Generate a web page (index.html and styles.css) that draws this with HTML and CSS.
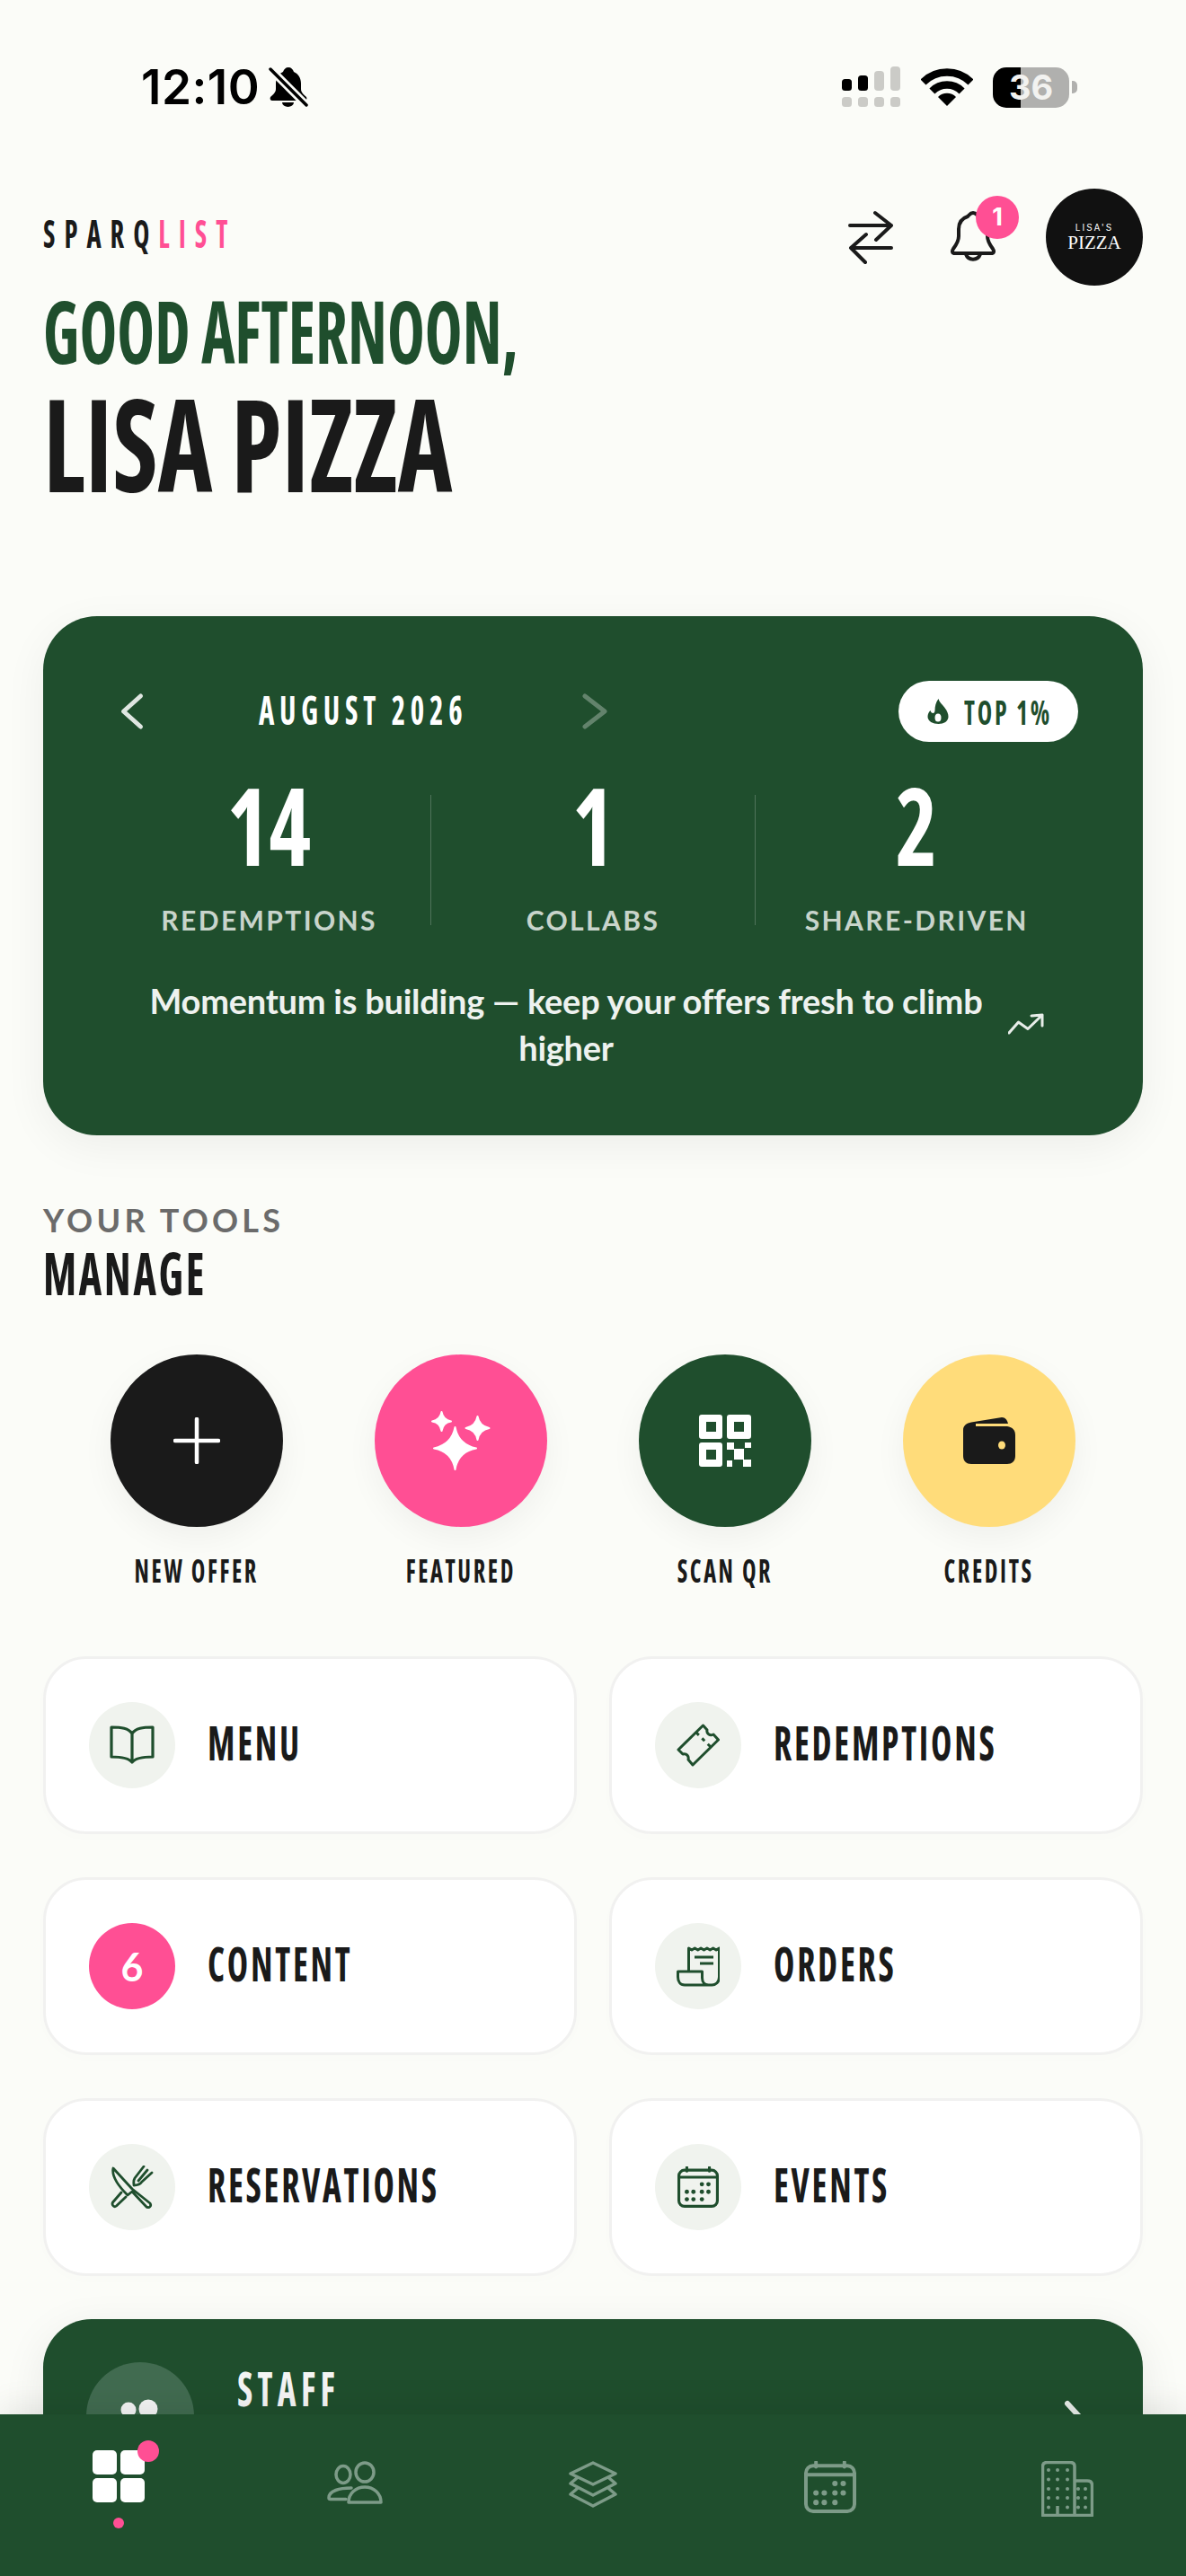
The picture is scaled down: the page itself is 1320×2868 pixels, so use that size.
FILE: index.html
```html
<!DOCTYPE html>
<html lang="en">
<head>
  <meta charset="UTF-8">
  <title>Dashboard</title>
  <link rel="stylesheet" href="styles.css">
</head>
<body>
  <svg class="defs" aria-hidden="true">
    <symbol id="calendar" viewBox="0 0 44 44">
      <rect x="1.5" y="4" width="41" height="38.5" rx="6" fill="none" stroke="currentColor" stroke-width="3"/>
      <path d="M1.5 11.5h41M10 1v4M34 1v4" fill="none" stroke="currentColor" stroke-width="3" stroke-linecap="round"/>
      <g fill="currentColor">
        <circle cx="26" cy="19" r="2.3"/><circle cx="33" cy="19" r="2.3"/>
        <circle cx="10" cy="27" r="2.3"/><circle cx="17" cy="27" r="2.3"/><circle cx="26" cy="27" r="2.3"/><circle cx="33" cy="27" r="2.3"/>
        <circle cx="10" cy="35" r="2.3"/><circle cx="17" cy="35" r="2.3"/><circle cx="26" cy="35" r="2.3"/>
      </g>
    </symbol>
  </svg>

  <div class="screen">
    <div class="status">
      <div class="status-left">
        <span class="time">12:10</span>
        <svg class="silent" width="44" height="46" viewBox="0 0 44 46">
          <path d="M22 1c-3 0-5 2-6 5-5 2-8 7-8 13v6c0 4-3 6-6 9-1 2 0 4 2 4h36c2 0 3-2 2-4-3-3-6-5-6-9v-6c0-6-3-11-8-13-1-3-3-5-6-5z"/>
          <path d="M15 40h13a6.500 5 0 0 1-13 0z"/>
          <path d="M3 4l38 38" stroke="#fbfcf8" stroke-width="9"/>
          <path d="M2 3l40 40" stroke="#000" stroke-width="3.500" stroke-linecap="round"/>
        </svg>
      </div>
      <div class="status-right">
        <svg width="66" height="46" viewBox="0 0 66 46">
          <g fill="#cbcbc7">
            <rect x="36" y="5" width="11" height="22" rx="4"/><rect x="54" y="0" width="11" height="27" rx="4"/>
            <rect x="0" y="34" width="11" height="11" rx="3.500"/><rect x="18" y="34" width="11" height="11" rx="3.500"/>
            <rect x="36" y="34" width="11" height="11" rx="3.500"/><rect x="54" y="34" width="11" height="11" rx="3.500"/>
          </g>
          <rect x="0" y="14" width="11" height="13" rx="3.500"/><rect x="18" y="10" width="11" height="17" rx="3.500"/>
        </svg>
        <svg width="58" height="44" viewBox="0 0 58 44">
          <path d="M2.500 16.500A37.500 37.500 0 0 1 55.500 16.500M12.400 26.400A23.500 23.500 0 0 1 45.600 26.400" fill="none" stroke="#000" stroke-width="8.500"/>
          <path d="M29 43L19 33A14 14 0 0 1 39 33Z"/>
        </svg>
        <div class="battery-wrap">
          <div class="battery">36</div>
          <div class="battery-nub"></div>
        </div>
      </div>
    </div>

    <header class="top">
      <div class="brand">
        <div class="logo"><span class="bn">SPARQ<em>LIST</em></span></div>
        <div class="greet"><span class="bn">GOOD AFTERNOON,</span></div>
        <h1 class="name"><span class="bn">LISA PIZZA</span></h1>
      </div>
      <div class="top-actions">
        <svg class="swap" width="50" height="62" viewBox="0 0 50 62">
          <path d="M2 18h46M30 4l18 14-17 16M48 43H3M20 28L3 43l16 16" fill="none" stroke="#1a1a1a" stroke-width="4" stroke-linecap="round" stroke-linejoin="round"/>
        </svg>
        <div class="bell">
          <svg width="54" height="62" viewBox="0 0 54 62" fill="none" stroke="#1a1a1a" stroke-width="4" stroke-linejoin="round">
            <path d="M27 4c-3 0-4 2-6 4-6 2-10 6-10 14v8c0 6-3 10-6 14-2 3-1 5 2 5h40c3 0 4-2 2-5-3-4-6-8-6-14v-8c0-8-4-12-10-14-2-2-3-4-6-4z"/>
            <path d="M19 50a8.500 8.500 0 0 0 16 0"/>
          </svg>
          <span class="bell-badge">1</span>
        </div>
        <div class="avatar">
          <span class="avatar-small">LISA'S</span>
          <span class="avatar-big">PIZZA</span>
        </div>
      </div>
    </header>

    <section class="stats-card">
      <div class="stats-head">
        <div class="month-nav">
          <svg width="54" height="54" viewBox="0 0 54 54"><path d="M36.500 10L17.500 27l19 17" fill="none" stroke="#dfe6e1" stroke-width="5" stroke-linecap="round" stroke-linejoin="round"/></svg>
          <span class="month"><span class="bn bn-c">AUGUST 2026</span></span>
          <svg class="next" width="54" height="54" viewBox="0 0 54 54"><path d="M16 10l22 17-22 17" fill="none" stroke="#fff" stroke-width="5" stroke-linecap="round" stroke-linejoin="round"/></svg>
        </div>
        <div class="rank-pill">
          <svg width="24" height="28" viewBox="0 0 24 28">
            <path d="M12.500 0c1 4 4 6 7 10 3 4 4 7 4 10 0 5-5 8-11 8S.5 25 .5 20c0-3 1-5 3-7 .5 2 1.500 3 3 3 1 0 2-1 2-3 0-5 1-9 4-13z" fill="#1f4e2d"/>
            <ellipse cx="12" cy="21" rx="3.500" ry="4.500" fill="#fff"/>
          </svg>
          <span class="bn">TOP 1%</span>
        </div>
      </div>

      <div class="stats-row">
        <div class="stat">
          <div class="stat-num"><span class="bn bn-c">14</span></div>
          <div class="stat-label">REDEMPTIONS</div>
        </div>
        <div class="stat-divider"></div>
        <div class="stat">
          <div class="stat-num"><span class="bn bn-c">1</span></div>
          <div class="stat-label">COLLABS</div>
        </div>
        <div class="stat-divider"></div>
        <div class="stat">
          <div class="stat-num"><span class="bn bn-c">2</span></div>
          <div class="stat-label">SHARE-DRIVEN</div>
        </div>
      </div>

      <div class="momentum">
        <p>Momentum is building — keep your offers fresh to climb higher</p>
        <svg width="40" height="24" viewBox="0 0 40 24"><path d="M1 22L11.500 10 22 17.500 38 2M26 3l12-1v12" fill="none" stroke="#e8ede9" stroke-width="3" stroke-linecap="round" stroke-linejoin="round"/></svg>
      </div>
    </section>

    <section class="tools">
      <div class="eyebrow">YOUR TOOLS</div>
      <h2 class="section-title"><span class="bn">MANAGE</span></h2>

      <div class="quick-row">
        <div class="quick">
          <div class="quick-circle black">
            <svg width="52" height="52" viewBox="0 0 52 52"><path d="M26 2v48M2 26h48" stroke="#fff" stroke-width="4.500" stroke-linecap="round"/></svg>
          </div>
          <div class="quick-label"><span class="bn bn-c">NEW OFFER</span></div>
        </div>
        <div class="quick">
          <div class="quick-circle pink">
            <svg width="72" height="72" viewBox="0 0 72 72" fill="#fff" stroke="#fff" stroke-width="2" stroke-linejoin="round">
              <path d="M29.500 21Q33 40 53 44.500 33 48 29.500 68 26 48 6 44.500 26 40 29.500 21z"/>
              <path d="M14.500 4Q16 13 25 14.500 16 16 14.500 25 13 16 4 14.500 13 13 14.500 4z"/>
              <path d="M54.500 9Q56.500 20 67.500 22 56.500 24 54.500 35 52.500 24 41.500 22 52.500 20 54.500 9z"/>
            </svg>
          </div>
          <div class="quick-label"><span class="bn bn-c">FEATURED</span></div>
        </div>
        <div class="quick">
          <div class="quick-circle green">
            <svg width="58" height="58" viewBox="0 0 58 58" fill="#fff">
              <path fill-rule="evenodd" d="M3 0h20a3 3 0 0 1 3 3v21a3 3 0 0 1-3 3H3a3 3 0 0 1-3-3V3a3 3 0 0 1 3-3zM8 8v11h11V8zM34 0h21a3 3 0 0 1 3 3v21a3 3 0 0 1-3 3H34a3 3 0 0 1-3-3V3a3 3 0 0 1 3-3zM39 8v11h11V8zM3 31h20a3 3 0 0 1 3 3v21a3 3 0 0 1-3 3H3a3 3 0 0 1-3-3V34a3 3 0 0 1 3-3zM8 39v11h11V39z"/>
              <rect x="31" y="31" width="8" height="8"/><rect x="51" y="31" width="7" height="6"/><rect x="39" y="38" width="11" height="12"/><rect x="31" y="51" width="6" height="7"/><rect x="49" y="50" width="9" height="8"/>
            </svg>
          </div>
          <div class="quick-label"><span class="bn bn-c">SCAN QR</span></div>
        </div>
        <div class="quick">
          <div class="quick-circle yellow">
            <svg width="58" height="53" viewBox="0 0 58 53">
              <path d="M9 5.500L43 0c4 0 6 3 7 7H14v3h35c6 1 9 4 9 10v23c0 6-4 9-9 9H9c-5 0-9-3-9-9V14c0-5 4-7.500 9-8.500z" fill="#1a1a1a"/>
              <ellipse cx="43" cy="31" rx="4" ry="4.500" fill="#ffdc7a"/>
            </svg>
          </div>
          <div class="quick-label"><span class="bn bn-c">CREDITS</span></div>
        </div>
      </div>
    </section>

    <section class="tool-grid">
      <div class="tool-card">
        <div class="tool-icon">
          <svg width="50" height="44" viewBox="0 0 50 44" fill="none" stroke="#1f4e2d" stroke-width="3.200" stroke-linejoin="round">
            <path d="M25 9C21 3 13 2 2 2v33c11 0 19 1 23 6 4-5 12-6 23-6V2C37 2 29 3 25 9v32"/>
          </svg>
        </div>
        <span class="tool-name bn">MENU</span>
      </div>
      <div class="tool-card">
        <div class="tool-icon">
          <svg width="48" height="48" viewBox="0 0 48 48" fill="none" stroke="#1f4e2d" stroke-width="3" stroke-linejoin="round">
            <path d="M29.500 2L34 7c-1 4 3 7 7 5l5.500 6L18 46l-5-6c1-4-2-7-6-6l-5-5z"/>
            <path d="M22 10l17 17" stroke-dasharray="4 5"/>
          </svg>
        </div>
        <span class="tool-name bn">REDEMPTIONS</span>
      </div>
      <div class="tool-card">
        <div class="tool-icon count">6</div>
        <span class="tool-name bn">CONTENT</span>
      </div>
      <div class="tool-card">
        <div class="tool-icon">
          <svg width="48" height="45" viewBox="0 0 48 45" fill="none" stroke="#1f4e2d" stroke-width="3" stroke-linejoin="round">
            <path d="M13.500 28V2l3.400 2 3.400-2 3.400 2 3.400-2 3.400 2 3.400-2 3.400 2 3.400-2 3.400 2 3.400-2v32c0 6-4 9-8 9H9c-5 0-7.500-4-7.500-9v-6h27v7c0 5 3 8 7 8"/>
            <path d="M20 12h21M26 19h15"/>
          </svg>
        </div>
        <span class="tool-name bn">ORDERS</span>
      </div>
      <div class="tool-card">
        <div class="tool-icon">
          <svg width="48" height="48" viewBox="0 0 48 48" fill="none" stroke="#1f4e2d" stroke-width="2.800" stroke-linejoin="round" stroke-linecap="round">
            <path d="M3 3l21 23 20 16c2 3-1 6-4 4L24 29l-5 4C8 22 1 12 3 3z"/>
            <path d="M12 30L2.500 41c-1.500 3 1.500 6 4 4L17 35"/>
            <path d="M37 1L27 14c-2 3-1 6-1 8 3 0 7-1 9-4L46 8M41 5L31 17"/>
          </svg>
        </div>
        <span class="tool-name bn">RESERVATIONS</span>
      </div>
      <div class="tool-card">
        <div class="tool-icon">
          <svg class="cal-green" width="46" height="46"><use href="#calendar"/></svg>
        </div>
        <span class="tool-name bn">EVENTS</span>
      </div>
    </section>

    <section class="staff-card">
      <div class="staff-icon">
        <svg width="60" height="60" viewBox="0 0 60 60" fill="#f4f4f4">
          <circle cx="17" cy="23" r="8.500"/><circle cx="39" cy="22" r="10.500"/>
          <path d="M2 50c0-10 7-16 16-16 9 0 16 6 16 16zM24 50c0-10 7-15 16-15 10 0 17 6 17 15z"/>
        </svg>
      </div>
      <div class="staff-name"><span class="bn">STAFF</span></div>
      <svg class="staff-chevron" width="32" height="56" viewBox="0 0 32 56"><path d="M4 4l22 24L4 52" fill="none" stroke="#e6ebe7" stroke-width="6" stroke-linecap="round" stroke-linejoin="round"/></svg>
    </section>

    <nav class="tabbar">
      <div class="tab tab-active">
        <div class="home-grid">
          <i></i><i></i><i></i><i></i>
          <span class="home-badge"></span>
        </div>
        <span class="tab-dot"></span>
      </div>
      <div class="tab">
        <svg width="64" height="50" viewBox="0 0 64 50" fill="none" stroke="currentColor" stroke-width="3.500" stroke-linejoin="round" stroke-linecap="round">
          <ellipse cx="18" cy="15" rx="8" ry="9.500"/><ellipse cx="42" cy="12.500" rx="10" ry="10.500"/>
          <path d="M24 46c0-10 8-17 18-17s18 7 18 17z"/>
          <path d="M27 30C14 30 2 33 2 41c0 1 .5 1.500 2 1.500h17"/>
        </svg>
      </div>
      <div class="tab">
        <svg width="54" height="54" viewBox="0 0 54 54" fill="none" stroke="currentColor" stroke-width="3.500" stroke-linejoin="round" stroke-linecap="round">
          <path d="M27 2l25 12-25 12L2 14zM9 19l-7 6 25 13 25-13-7-6M9 31l-7 6 25 13 25-13-7-6"/>
        </svg>
      </div>
      <div class="tab">
        <svg width="58" height="58"><use href="#calendar"/></svg>
      </div>
      <div class="tab">
        <svg width="58" height="62" viewBox="0 0 58 62" fill="none" stroke="currentColor" stroke-width="3.500" stroke-linejoin="round">
          <path d="M37 60.500V6c0-3-2-4.500-5-4.500H6.500c-3 0-5 1.500-5 4.500v54.500zM37 22h14c4 0 5.500 2 5.500 5v33.500H37M18 60V50"/>
          <g fill="currentColor" stroke="none">
            <circle cx="8" cy="10" r="2"/><circle cx="18" cy="10" r="2"/><circle cx="29" cy="10" r="2"/>
            <circle cx="8" cy="20.500" r="2"/><circle cx="18" cy="20.500" r="2"/><circle cx="29" cy="20.500" r="2"/>
            <circle cx="8" cy="31" r="2"/><circle cx="18" cy="31" r="2"/><circle cx="29" cy="31" r="2"/>
            <circle cx="8" cy="41" r="2"/><circle cx="18" cy="41" r="2"/><circle cx="29" cy="41" r="2"/>
            <circle cx="8" cy="51.500" r="2"/><circle cx="29" cy="51.500" r="2"/>
            <circle cx="41" cy="31" r="2"/><circle cx="49" cy="31" r="2"/>
            <circle cx="41" cy="41" r="2"/><circle cx="49" cy="41" r="2"/>
            <circle cx="41" cy="51.500" r="2"/><circle cx="49" cy="51.500" r="2"/>
          </g>
        </svg>
      </div>
    </nav>
  </div>
</body>
</html>
```
FILE: styles.css
```css
* {
  box-sizing: border-box;
  margin: 0;
  padding: 0;
}

body {
  background: #fbfcf8;
  font-family: 'Lato', sans-serif;
  color: #1a1a1a;
}

.defs {
  display: none;
}

.screen {
  position: relative;
  width: 1320px;
  height: 2868px;
  overflow: hidden;
  background: #fbfcf8;
}

/* tall condensed headline face */
.bn {
  display: block;
  width: max-content;
  font-family: 'Open Sans', sans-serif;
  font-stretch: 75%;
  font-weight: 700;
  white-space: nowrap;
  transform: scaleX(0.73);
  transform-origin: left center;
}

.bn-c {
  margin: 0 auto;
  transform-origin: center center;
}

/* status bar */
.status {
  display: flex;
  justify-content: space-between;
  align-items: center;
  height: 194px;
  margin-bottom: 16px;
  padding: 0 121px 0 157px;
}

.status-left {
  display: flex;
  align-items: center;
  gap: 10px;
}

.time {
  font-family: 'Inter', sans-serif;
  font-size: 53px;
  font-weight: 600;
  line-height: 60px;
  letter-spacing: 0.5px;
  color: #000;
}

.status-right {
  display: flex;
  align-items: center;
  gap: 22px;
}

.battery-wrap {
  display: flex;
  align-items: center;
  gap: 3px;
}

.battery {
  width: 85px;
  height: 45px;
  border-radius: 15px;
  background: linear-gradient(90deg, #000 31px, #b0b0ae 31px);
  color: #f2f2f0;
  font-family: 'Inter', sans-serif;
  font-size: 38px;
  font-weight: 700;
  line-height: 45px;
  text-align: center;
}

.battery-nub {
  width: 6px;
  height: 14px;
  border-radius: 0 5px 5px 0;
  background: #b0b0ae;
}

/* header */
.top {
  display: flex;
  justify-content: space-between;
  padding: 0 48px;
}

.logo {
  margin-top: 25px;
  font-size: 42px;
  line-height: 50px;
  letter-spacing: 0.325em;
}

.logo em {
  font-style: normal;
  color: #ff4f94;
}

.greet {
  margin-top: 33px;
  font-size: 96px;
  line-height: 100px;
  color: #1f4e2d;
}

.greet .bn {
  transform: scaleX(0.735);
}

.name {
  margin-top: 4px;
  font-size: 144px;
  line-height: 140px;
  font-weight: 700;
}

.name .bn {
  transform: scaleX(0.8);
}

.top-actions {
  display: flex;
  align-items: center;
  height: 108px;
}

.swap {
  margin-right: 62px;
}

.bell {
  position: relative;
  width: 54px;
  height: 62px;
  margin-right: 54px;
}

.bell-badge {
  position: absolute;
  left: 30px;
  top: -15px;
  width: 48px;
  height: 48px;
  border-radius: 50%;
  background: #ff4f94;
  color: #fff;
  font-family: 'Inter', sans-serif;
  font-size: 27px;
  font-weight: 700;
  line-height: 48px;
  text-align: center;
}

.avatar {
  display: flex;
  flex-direction: column;
  align-items: center;
  justify-content: center;
  width: 108px;
  height: 108px;
  border-radius: 50%;
  background: #111;
  color: #fff;
}

.avatar-small {
  font-family: 'Inter', sans-serif;
  font-size: 10px;
  line-height: 12px;
  letter-spacing: 0.2em;
}

.avatar-big {
  font-family: 'Liberation Serif', serif;
  font-size: 21px;
  line-height: 22px;
}

/* stats card */
.stats-card {
  height: 578px;
  margin: 124px 48px 0;
  padding: 72px;
  border-radius: 60px;
  background: #1f4e2d;
  color: #fff;
  box-shadow: 0 12px 48px rgba(0, 0, 0, 0.06);
}

.stats-head {
  display: flex;
  justify-content: space-between;
  align-items: center;
  height: 68px;
}

.month-nav {
  display: flex;
  justify-content: space-between;
  align-items: center;
  width: 569px;
}

.month {
  margin-bottom: 4px;
  font-size: 45px;
  line-height: 54px;
  letter-spacing: 0.175em;
}

.next {
  opacity: 0.3;
}

.rank-pill {
  display: flex;
  align-items: center;
  gap: 17px;
  width: 200px;
  height: 68px;
  padding-left: 32px;
  border-radius: 34px;
  background: #fff;
  color: #1f4e2d;
  font-size: 38px;
  letter-spacing: 0.1em;
  overflow: hidden;
}

.rank-pill svg {
  flex-shrink: 0;
}

.stats-row {
  display: flex;
  margin-top: 37px;
}

.stat {
  flex: 1;
  text-align: center;
}

.stat-num {
  font-size: 120px;
  line-height: 110px;
}

.stat-num .bn {
  transform: scaleX(0.83);
}

.stat-label {
  margin-top: 33px;
  font-size: 30px;
  font-weight: 700;
  line-height: 36px;
  letter-spacing: 0.08em;
  color: #c8d4cb;
}

.stat-divider {
  width: 1px;
  height: 145px;
  margin-top: 22px;
  background: rgba(255, 255, 255, 0.22);
}

.momentum {
  display: flex;
  justify-content: center;
  align-items: center;
  gap: 12px;
  margin-top: 46px;
  padding-right: 8px;
}

.momentum p {
  width: 960px;
  font-size: 38px;
  font-weight: 700;
  line-height: 52px;
  letter-spacing: -0.25px;
  text-align: center;
  color: #eef2ef;
}

/* manage section */
.tools {
  padding: 73px 48px 0;
}

.eyebrow {
  font-size: 36px;
  font-weight: 700;
  line-height: 42px;
  letter-spacing: 0.118em;
  color: #6b6b6b;
}

.section-title {
  margin-top: 2px;
  font-size: 66px;
  font-weight: 700;
  line-height: 70px;
  letter-spacing: 0.055em;
}

.quick-row {
  display: flex;
  margin-top: 57px;
  padding: 0 24px;
}

.quick {
  display: flex;
  flex-direction: column;
  align-items: center;
  width: 294px;
}

.quick-circle {
  display: flex;
  align-items: center;
  justify-content: center;
  width: 192px;
  height: 192px;
  border-radius: 50%;
  box-shadow: 0 12px 36px rgba(0, 0, 0, 0.05);
}

.black { background: #1a1a1a; }
.pink { background: #ff4f94; }
.green { background: #1f4e2d; }
.yellow { background: #ffdc7a; }

.quick-label {
  margin-top: 29px;
  font-size: 36px;
  line-height: 40px;
  letter-spacing: 0.1em;
}

/* tool cards */
.tool-grid {
  display: grid;
  grid-template-columns: 594px 594px;
  grid-auto-rows: 198px;
  gap: 48px 36px;
  margin-top: 75px;
  padding: 0 48px;
}

.tool-card {
  display: flex;
  align-items: center;
  gap: 36px;
  padding: 0 48px;
  border: 3px solid #f1f1f0;
  border-radius: 48px;
  background: #fff;
  box-shadow: 0 4px 16px rgba(0, 0, 0, 0.01);
}

.tool-icon {
  display: flex;
  align-items: center;
  justify-content: center;
  flex-shrink: 0;
  width: 96px;
  height: 96px;
  border-radius: 50%;
  background: #f0f3ee;
}

.tool-icon.count {
  background: #ff4f94;
  color: #fff;
  font-family: 'Lato', sans-serif;
  font-size: 43px;
  font-weight: 700;
}

.tool-name {
  margin-bottom: 8px;
  font-size: 54px;
  line-height: 56px;
  letter-spacing: 0.07em;
}

.cal-green {
  color: #1f4e2d;
}

/* staff card */
.staff-card {
  display: flex;
  align-items: flex-start;
  gap: 48px;
  height: 240px;
  margin: 48px 48px 0;
  padding: 48px;
  border-radius: 54px;
  background: #1f4e2d;
  box-shadow: 0 12px 48px rgba(0, 0, 0, 0.08);
  color: #f4f4f4;
}

.staff-icon {
  display: flex;
  align-items: center;
  justify-content: center;
  width: 120px;
  height: 120px;
  border-radius: 50%;
  background: #416b50;
}

.staff-name {
  flex: 1;
  font-size: 54px;
  line-height: 56px;
  letter-spacing: 0.135em;
}

.staff-chevron {
  margin: 42px 8px 0 0;
}

/* bottom nav, sits over the page */
.tabbar {
  position: absolute;
  left: 0;
  right: 0;
  bottom: 0;
  display: flex;
  height: 180px;
  background: #1f4e2d;
  box-shadow: 0 -10px 32px rgba(0, 0, 0, 0.08);
  color: #7d9b88;
}

.tab {
  display: flex;
  flex-direction: column;
  align-items: center;
  width: 264px;
  padding-top: 52px;
}

.tab-active {
  padding-top: 40px;
}

.home-grid {
  position: relative;
  display: grid;
  grid-template-columns: 27px 27px;
  grid-auto-rows: 27px;
  gap: 4px;
}

.home-grid i {
  display: block;
  border-radius: 5px;
  background: #fff;
}

.home-badge {
  position: absolute;
  left: 50px;
  top: -11px;
  width: 24px;
  height: 24px;
  border-radius: 50%;
  background: #ff4f94;
}

.tab-dot {
  width: 12px;
  height: 12px;
  margin-top: 17px;
  border-radius: 50%;
  background: #ff4f94;
}
```
